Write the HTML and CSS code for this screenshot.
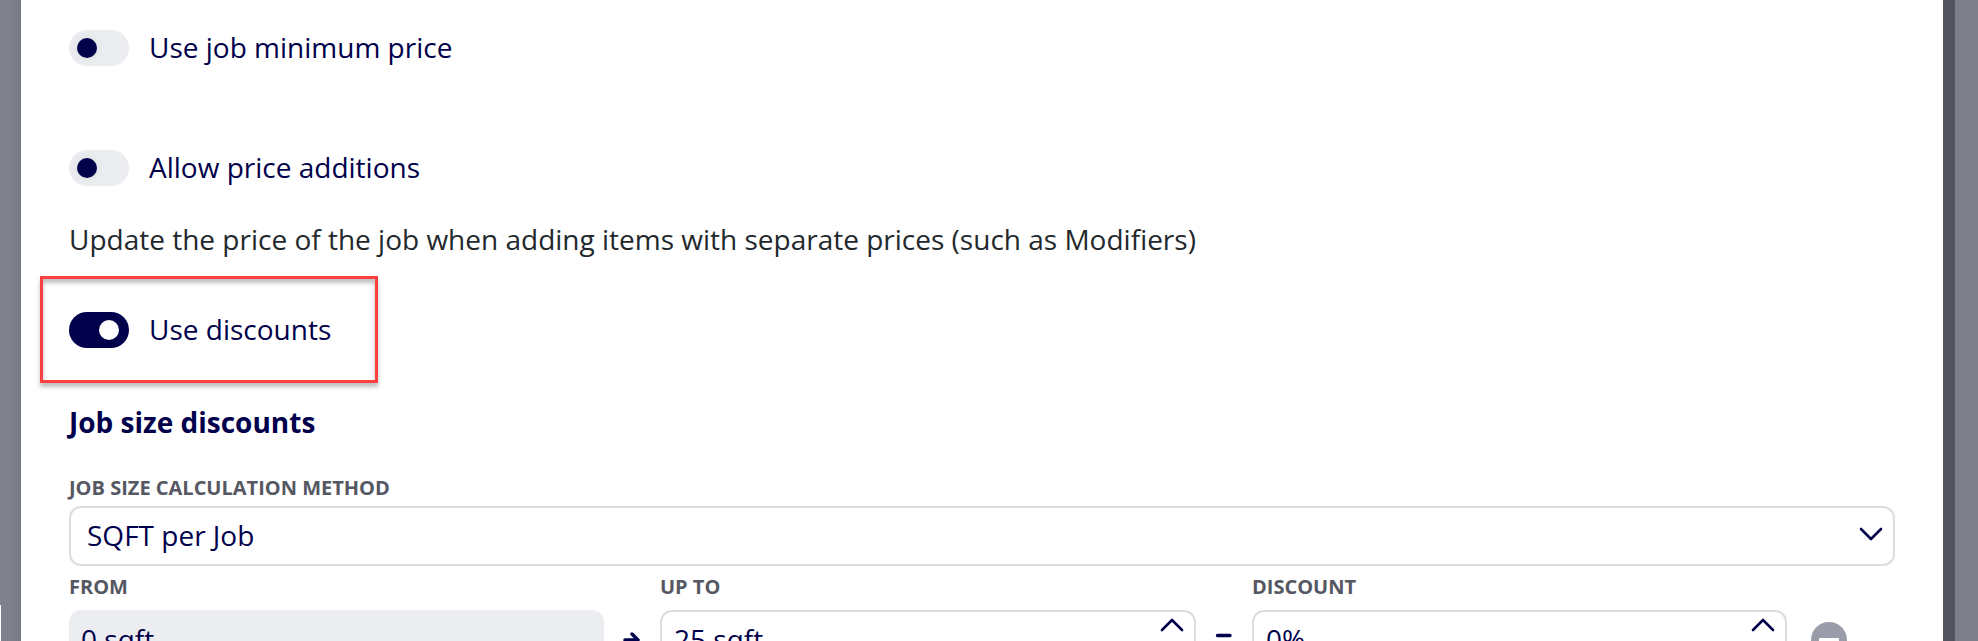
FILE: index.html
```html
<!DOCTYPE html>
<html lang="en">
<head>
    <meta charset="UTF-8">
    <meta name="viewport" content="width=device-width, initial-scale=1.0">
    <title>Job pricing</title>
    <link rel="stylesheet" href="styles.css">
</head>
<body>
    <div class="backdrop-left">
        <div class="page-edge"></div>
    </div>

    <main class="modal">
        <div class="toggle-row">
            <span class="toggle"><span class="knob"></span></span>
            <span class="toggle-label">Use job minimum price</span>
        </div>

        <div class="toggle-row additions">
            <span class="toggle"><span class="knob"></span></span>
            <span class="toggle-label">Allow price additions</span>
        </div>
        <p class="hint">Update the price of the job when adding items with separate prices (such as Modifiers)</p>

        <div class="highlight">
            <div class="toggle-row">
                <span class="toggle on"><span class="knob"></span></span>
                <span class="toggle-label">Use discounts</span>
            </div>
        </div>

        <h2>Job size discounts</h2>

        <label class="field-label">JOB SIZE CALCULATION METHOD</label>
        <div class="field select">
            <span>SQFT per Job</span>
            <svg class="chevron" width="24" height="14" viewBox="0 0 24 14">
                <path d="M2 2l10 10L22 2"/>
            </svg>
        </div>

        <div class="discount-grid">
            <label class="field-label">FROM</label>
            <span></span>
            <label class="field-label">UP TO</label>
            <span></span>
            <label class="field-label">DISCOUNT</label>
            <span></span>

            <div class="field disabled">0 sqft</div>
            <svg class="sign" width="18" height="18" viewBox="0 0 18 18">
                <path d="M2 9h13M9 3l6 6-6 6"/>
            </svg>
            <div class="field number">
                <span>25 sqft</span>
                <svg class="chevron" width="24" height="14" viewBox="0 0 24 14">
                    <path d="M2 12L12 2l10 10"/>
                </svg>
            </div>
            <svg class="sign equals" width="18" height="18" viewBox="0 0 18 18">
                <path d="M2.5 4.5h12.500M2.500 12.500h12.500"/>
            </svg>
            <div class="field number">
                <span>0%</span>
                <svg class="chevron" width="24" height="14" viewBox="0 0 24 14">
                    <path d="M2 12L12 2l10 10"/>
                </svg>
            </div>
            <svg class="remove" width="36" height="36" viewBox="0 0 36 36">
                <circle cx="18" cy="18" r="18"/>
                <rect x="8" y="16" width="20" height="4" rx="1"/>
            </svg>
        </div>
    </main>

    <div class="scrollbar"></div>
    <div class="backdrop-right"></div>
</body>
</html>
```

FILE: styles.css
```css
* {
    box-sizing: border-box;
}

body {
    margin: 0;
    height: 641px;
    display: flex;
    overflow: hidden;
    font-family: 'Open Sans', sans-serif;
    font-size: 28px;
    font-weight: 400;
    line-height: 36px;
    color: #00004b;
    background-color: #7d7f8b;
}

.backdrop-left {
    width: 21px;
    height: 641px;
    display: flex;
    align-items: flex-end;
    background: linear-gradient(to right, #7f818d, #7d7f8a 60%, #757783);
}

.page-edge {
    width: 1px;
    height: 36px;
    background-color: #fff;
}

.modal {
    width: 1922px;
    height: 641px;
    padding: 30px 48px 0;
    overflow: hidden;
    background-color: #fff;
}

.scrollbar {
    width: 12px;
    background-color: #52555e;
}

.backdrop-right {
    flex: 1;
    background-color: #7d7f8b;
}

.toggle-row {
    display: flex;
    align-items: center;
    gap: 20px;
    height: 36px;
}

.toggle-label {
    padding-bottom: 2px;
}

.additions {
    margin-top: 84px;
}

.toggle {
    display: flex;
    width: 60px;
    height: 36px;
    padding: 8px;
    border-radius: 18px;
    background-color: #ecedf1;
}

.knob {
    width: 20px;
    height: 20px;
    border-radius: 50%;
    background-color: #00004b;
    box-shadow: 0 0 12px rgba(0, 30, 0, 0.08);
}

.toggle.on {
    justify-content: flex-end;
    padding-right: 10px;
    background-color: #00004b;
}

.toggle.on .knob {
    background-color: #fff;
    box-shadow: none;
}

.hint {
    margin: 35px 0 0;
    color: #23282d;
}

.highlight {
    width: 338px;
    height: 107px;
    margin: 19px 0 0 -29px;
    padding: 33px 26px;
    border: 3px solid #ff4040;
    box-shadow: 0 4px 4px rgba(0, 0, 0, 0.25), inset 0 4px 4px rgba(0, 0, 0, 0.25);
}

h2 {
    margin: 21px 0 0;
    font-size: 28px;
    font-weight: 700;
    line-height: 36px;
}

.field-label {
    display: block;
    font-size: 20px;
    font-weight: 700;
    line-height: 28px;
    color: #555862;
}

h2 + .field-label {
    margin-top: 34px;
}

.field {
    display: flex;
    justify-content: space-between;
    height: 60px;
    padding: 9px 10px 11px 12px;
    border: 2px solid #dcdce3;
    border-radius: 12px;
    background-color: #fff;
}

.select {
    width: 1826px;
    margin-top: 4px;
    padding-left: 16px;
}

.select .chevron {
    margin-top: 10px;
}

.chevron {
    fill: none;
    stroke: #00004b;
    stroke-width: 2.6;
    stroke-linecap: round;
    stroke-linejoin: round;
}

.discount-grid {
    display: grid;
    grid-template-columns: 535px 56px 536px 56px 535px 84px;
    row-gap: 9px;
    margin-top: 7px;
}

.disabled {
    padding-left: 10px;
    border-color: #ecedf1;
    background-color: #ecedf1;
}

.number .chevron {
    margin-top: -3px;
}

.sign {
    align-self: center;
    justify-self: center;
    fill: none;
    stroke: #00004b;
    stroke-width: 3.4;
    stroke-linecap: round;
    stroke-linejoin: round;
}

.remove {
    align-self: center;
    margin-left: 24px;
    fill: #9a9ca9;
}

.remove rect {
    fill: #fff;
}
```
